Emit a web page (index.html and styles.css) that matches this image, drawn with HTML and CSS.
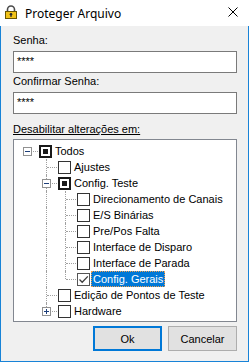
FILE: index.html
```html
<!DOCTYPE html>
<html lang="pt">
<head>
  <title>Proteger Arquivo</title>
  <meta charset="UTF-8">
  <link rel="stylesheet" href="styles.css">
</head>
<body>
  <div class="window">
    <div class="titlebar">
      <svg class="lock" width="16" height="16" viewBox="0 0 16 16">
        <path d="M4.5 6.5V4.5a3.5 3.5 0 0 1 7 0V6.5" fill="none" stroke="#4a4a4a" stroke-width="1.6"/>
        <rect x="2.5" y="6.5" width="11" height="7" fill="#f2c318" stroke="#6b5600"/>
        <circle cx="8" cy="9.3" r="1.3" fill="#2b2b2b"/>
        <rect x="7.4" y="9.5" width="1.2" height="2.5" fill="#2b2b2b"/>
      </svg>
      <span class="title">Proteger Arquivo</span>
      <svg class="close" width="10" height="10" viewBox="0 0 10 10">
        <path d="M0.5 0.5L9.5 9.5M9.5 0.5L0.5 9.5" stroke="#000" stroke-width="1"/>
      </svg>
    </div>

    <div class="content">
      <label class="field-label">Senha:</label>
      <div class="textbox">****</div>

      <label class="field-label second">Confirmar Senha:</label>
      <div class="textbox">****</div>

      <label class="field-label group"><u>Desabilitar alterações em:</u></label>

      <div class="tree">
        <div class="node">
          <span class="cell root"><span class="exp minus"></span></span>
          <span class="check mixed"></span>
          <span class="text">Todos</span>
        </div>
        <div class="node">
          <span class="cell"></span>
          <span class="cell tee"></span>
          <span class="check"></span>
          <span class="text">Ajustes</span>
        </div>
        <div class="node">
          <span class="cell"></span>
          <span class="cell tee"><span class="exp minus"></span></span>
          <span class="check mixed"></span>
          <span class="text">Config. Teste</span>
        </div>
        <div class="node">
          <span class="cell"></span>
          <span class="cell pipe"></span>
          <span class="cell tee"></span>
          <span class="check"></span>
          <span class="text">Direcionamento de Canais</span>
        </div>
        <div class="node">
          <span class="cell"></span>
          <span class="cell pipe"></span>
          <span class="cell tee"></span>
          <span class="check"></span>
          <span class="text">E/S Binárias</span>
        </div>
        <div class="node">
          <span class="cell"></span>
          <span class="cell pipe"></span>
          <span class="cell tee"></span>
          <span class="check"></span>
          <span class="text">Pre/Pos Falta</span>
        </div>
        <div class="node">
          <span class="cell"></span>
          <span class="cell pipe"></span>
          <span class="cell tee"></span>
          <span class="check"></span>
          <span class="text">Interface de Disparo</span>
        </div>
        <div class="node">
          <span class="cell"></span>
          <span class="cell pipe"></span>
          <span class="cell tee"></span>
          <span class="check"></span>
          <span class="text">Interface de Parada</span>
        </div>
        <div class="node">
          <span class="cell"></span>
          <span class="cell pipe"></span>
          <span class="cell elbow"></span>
          <span class="check checked">
            <svg width="11" height="11" viewBox="0 0 11 11">
              <path d="M1.5 5.5L4.2 8.2L9.8 2.4" fill="none" stroke="#3c3c3c" stroke-width="1.3"/>
            </svg>
          </span>
          <span class="text selected">Config. Gerais</span>
        </div>
        <div class="node">
          <span class="cell"></span>
          <span class="cell tee"></span>
          <span class="check"></span>
          <span class="text">Edição de Pontos de Teste</span>
        </div>
        <div class="node">
          <span class="cell"></span>
          <span class="cell elbow"><span class="exp plus"></span></span>
          <span class="check"></span>
          <span class="text">Hardware</span>
        </div>
      </div>

      <div class="buttons">
        <button class="btn default">Ok</button>
        <button class="btn">Cancelar</button>
      </div>
    </div>
  </div>
</body>
</html>
```

FILE: styles.css
```css
body {
  margin: 0;
  font-family: "Liberation Sans", Arial, sans-serif;
  font-size: 11px;
  color: #000;
  background: #f0f0f0;
}
.window {
  width: 249px;
  height: 362px;
  display: flex;
  flex-direction: column;
  background: #f0f0f0;
}
.titlebar {
  height: 26px;
  flex: none;
  background: #fff;
  display: flex;
  align-items: center;
  padding-left: 3px;
}
.lock {
  margin-right: 6px;
}
.title {
  font-family: "Noto Sans", "Open Sans", sans-serif;
  font-size: 12px;
}
.close {
  margin-left: auto;
  margin-right: 11px;
  margin-top: -2px;
}
.content {
  flex: 1;
  display: flex;
  flex-direction: column;
  border: 1px solid #1883d7;
  border-top: 0;
  padding: 8px 11px 10px 12px;
}
.field-label {
  line-height: 13px;
  margin-bottom: 4px;
}
.field-label.second {
  margin-top: 2px;
}
.field-label.group {
  margin-top: 9px;
  margin-bottom: 3px;
}
.textbox {
  height: 22px;
  box-sizing: border-box;
  border: 1px solid #7a7a7a;
  background: #fff;
  padding: 3px 3px;
  line-height: 13px;
}
.tree {
  height: 183px;
  box-sizing: border-box;
  border: 1px solid #828790;
  background: #fff;
  padding: 3px 0 0 4px;
}
.node {
  display: flex;
  align-items: center;
  height: 16px;
}
.cell {
  position: relative;
  width: 19px;
  height: 16px;
  flex: none;
}
.pipe::before,
.tee::before,
.elbow::before {
  content: "";
  position: absolute;
  left: 9px;
  top: 0;
  height: 16px;
  border-left: 1px dotted #a0a0a0;
}
.elbow::before {
  height: 8px;
}
.tee::after,
.elbow::after,
.root::after {
  content: "";
  position: absolute;
  left: 10px;
  top: 8px;
  width: 10px;
  border-top: 1px dotted #a0a0a0;
}
.exp {
  position: absolute;
  left: 5px;
  top: 4px;
  width: 9px;
  height: 9px;
  box-sizing: border-box;
  border: 1px solid #919191;
  background: #fff;
  z-index: 1;
}
.exp::before {
  content: "";
  position: absolute;
  left: 1px;
  top: 3px;
  width: 5px;
  height: 1px;
  background: #1e3f7a;
}
.plus::after {
  content: "";
  position: absolute;
  left: 3px;
  top: 1px;
  width: 1px;
  height: 5px;
  background: #1e3f7a;
}
.check {
  width: 13px;
  height: 13px;
  box-sizing: border-box;
  flex: none;
  margin-left: 2px;
  border: 1px solid #333;
  background: #fff;
  display: flex;
  align-items: center;
  justify-content: center;
}
.check.mixed {
  border: 2px solid #1a1a1a;
}
.check.mixed::before {
  content: "";
  width: 5px;
  height: 5px;
  background: #1a1a1a;
}
.check.checked {
  border-color: #555;
}
.text {
  margin-left: 1px;
  padding: 0 2px;
  line-height: 16px;
  height: 16px;
  white-space: nowrap;
}
.text.selected {
  background: #0078d7;
  color: #fff;
  outline: 1px dotted #f0a050;
  outline-offset: -1px;
}
.buttons {
  display: flex;
  justify-content: flex-end;
  gap: 6px;
  margin-top: 4px;
}
.btn {
  width: 69px;
  height: 25px;
  font-family: "Liberation Sans", Arial, sans-serif;
  font-size: 11px;
  color: #000;
  background: #e1e1e1;
  border: 1px solid #adadad;
  padding: 0;
}
.btn.default {
  border: 2px solid #0078d7;
}
```
